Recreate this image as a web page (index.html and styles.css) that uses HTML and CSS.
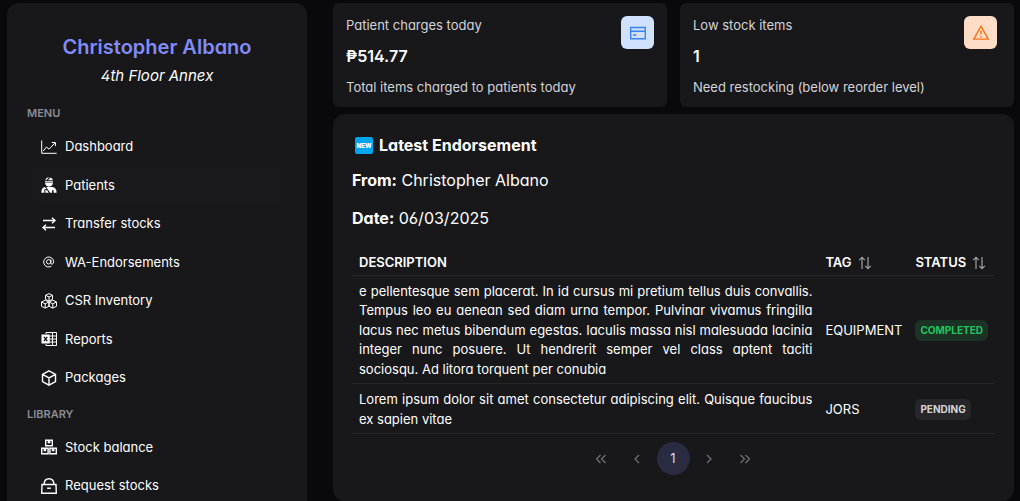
FILE: index.html
```html
<!DOCTYPE html>
<html lang="en">
<head>
<meta charset="utf-8">
<meta name="viewport" content="width=device-width, initial-scale=1">
<title>Dashboard</title>
<link rel="stylesheet" href="styles.css">
</head>
<body>
<div class="shell">
  <aside class="sidebar">
    <header class="profile">
      <h1 class="profile-name">Christopher Albano</h1>
      <p class="profile-place">4th Floor Annex</p>
    </header>
    <nav>
      <h2 class="nav-title">MENU</h2>
      <ul class="nav-list">
        <li><a class="nav-link" href="#dashboard">
          <svg class="nav-icon" viewBox="0 0 16 16"><path d="M.7 1.500v12.800h15M2.200 12l3.300-4 2.600 2.200L14 3.900M10.800 3.500h3.600v3.600"/></svg>Dashboard</a></li>
        <li><a class="nav-link active" href="#patients">
          <svg class="nav-icon solid" viewBox="0 0 16 16"><path d="M4.200 3.300C5 1.200 6.400.3 8 .3l-2.600 3zM7 3.300 9.400.5c1.200.4 2.100 1.300 2.500 2.800zM4 4.200h8v1.200H4zM4.100 6.100h7.800C11.700 8.400 10.100 9.700 8 9.700S4.300 8.400 4.100 6.100zM.4 15.700c-.1-3.200 1-5.200 3.400-5.700l1.800 2.300H3.300v3.400zM4.300 13.200h1.900l1.500 2.500H4.300zM5.100 10h5.800c3.300.3 4.800 2.400 4.700 5.700h-3v-2.500H11v2.500H9.200z"/></svg>Patients</a></li>
        <li><a class="nav-link" href="#transfer">
          <svg class="nav-icon bold" viewBox="0 0 16 16"><path d="M2 4.500h12M11 1.700l3 2.800-3 2.800M14 11.500H2M5 8.700l-3 2.800 3 2.800"/></svg>Transfer stocks</a></li>
        <li><a class="nav-link" href="#endorsements">
          <svg class="nav-icon" viewBox="0 0 16 16"><circle cx="7.700" cy="7.800" r="2.200"/><path d="M9.900 5.500v3.300c0 2 2.800 1.700 2.800-1A5 5 0 1 0 10.400 12.200"/></svg>WA-Endorsements</a></li>
        <li><a class="nav-link" href="#inventory">
          <svg class="nav-icon" viewBox="0 0 16 16"><path d="m8 .6 3.500 1.700v4L8 8 4.500 6.300v-4zM4.500 2.300 8 4l3.500-1.700M8 4v4M4.200 7.200l3.700 1.800v4.300l-3.700 1.800-3.700-1.800V9zM.5 9l3.700 1.800L7.900 9M4.200 10.800v4.300M11.800 7.200l3.700 1.800v4.300l-3.700 1.800-3.700-1.800V9zM8.100 9l3.700 1.800L15.500 9M11.800 10.800v4.300"/></svg>CSR Inventory</a></li>
        <li><a class="nav-link" href="#reports">
          <svg class="nav-icon" viewBox="0 0 16 16"><path d="M5 3V1.500h10.500v13H5V13M9 5h6.500M9 8h6.500M9 11h6.500M11.500 1.500v13"/><path class="fill" d="M.5 3.500h8.300v9H.5z"/><path class="cut" d="m3 5.800 3.300 4.400M6.300 5.800 3 10.200"/></svg>Reports</a></li>
        <li><a class="nav-link" href="#packages">
          <svg class="nav-icon bold" viewBox="0 0 16 16"><path d="m8 .9 6.500 3.500v7.200L8 15.100l-6.500-3.500V4.400zM1.500 4.400 8 7.900l6.500-3.500M8 7.900v7.200"/></svg>Packages</a></li>
      </ul>
      <h2 class="nav-title">LIBRARY</h2>
      <ul class="nav-list">
        <li><a class="nav-link" href="#balance">
          <svg class="nav-icon bold" viewBox="0 0 16 16"><path d="M4.700 1.200h6.600v5.600H4.700zM.7 9.200h6.400v5.600H.7zM8.900 9.200h6.400v5.600H8.900zM7.400 1.500v2h1.200v-2M3.300 9.500v2h1.200v-2M11.500 9.500v2h1.200v-2"/></svg>Stock balance</a></li>
        <li><a class="nav-link" href="#request">
          <svg class="nav-icon bold" viewBox="0 0 16 16"><path d="M1 6.500h14l.3 8.700H.7zM3 6.500C3.200 2.800 5.200.8 8 .8s4.800 2 5 5.700M6.200 10.200h3.600"/></svg>Request stocks</a></li>
      </ul>
    </nav>
  </aside>

  <main class="content">
    <div class="stats">
      <section class="stat">
        <div class="stat-text">
          <h2 class="stat-label">Patient charges today</h2>
          <p class="stat-value">₱514.77</p>
          <p class="stat-note">Total items charged to patients today</p>
        </div>
        <span class="stat-badge blue">
          <svg class="stat-icon" viewBox="0 0 16 16"><path d="M.7 2.500h14.600v11.300H.7zM.7 6.200h14.600M3 10h3.200"/></svg>
        </span>
      </section>
      <section class="stat alert">
        <div class="stat-text">
          <h2 class="stat-label">Low stock items</h2>
          <p class="stat-value">1</p>
          <p class="stat-note">Need restocking (below reorder level)</p>
        </div>
        <span class="stat-badge orange">
          <svg class="stat-icon" viewBox="0 0 16 16"><path d="m8 1.200 7.200 12.900H.8zM8 5.600v4M8 11v1.400"/></svg>
        </span>
      </section>
    </div>

    <section class="panel">
      <h2 class="panel-title">
        <svg class="new-icon" viewBox="0 0 18 17"><rect width="18" height="17" rx="2"/><text x="9" y="11" text-anchor="middle">NEW</text></svg>
        Latest Endorsement
      </h2>
      <p class="meta"><strong>From:</strong> Christopher Albano</p>
      <p class="meta"><strong>Date:</strong> 06/03/2025</p>

      <table class="table">
        <thead>
          <tr>
            <th class="wide">DESCRIPTION</th>
            <th><button class="sort" type="button">TAG <svg class="sort-icon" viewBox="0 0 14 14"><path d="M4 13V1.500M1.200 4.200 4 1.400l2.800 2.800M10 1v11.500M7.200 9.800l2.800 2.800 2.800-2.800"/></svg></button></th>
            <th><button class="sort" type="button">STATUS <svg class="sort-icon" viewBox="0 0 14 14"><path d="M4 13V1.500M1.200 4.200 4 1.400l2.800 2.800M10 1v11.500M7.200 9.800l2.800 2.800 2.800-2.800"/></svg></button></th>
          </tr>
        </thead>
        <tbody>
          <tr>
            <td class="description">e pellentesque sem placerat. In id cursus mi pretium tellus duis convallis. Tempus leo eu aenean sed diam urna tempor. Pulvinar vivamus fringilla lacus nec metus bibendum egestas. Iaculis massa nisl malesuada lacinia integer nunc posuere. Ut hendrerit semper vel class aptent taciti sociosqu. Ad litora torquent per conubia</td>
            <td>EQUIPMENT</td>
            <td><span class="tag done">COMPLETED</span></td>
          </tr>
          <tr>
            <td class="description">Lorem ipsum dolor sit amet consectetur adipiscing elit. Quisque faucibus ex sapien vitae</td>
            <td>JORS</td>
            <td><span class="tag pending">PENDING</span></td>
          </tr>
        </tbody>
      </table>

      <nav class="pager" aria-label="Pages">
        <button class="page" type="button" aria-label="First page"><svg class="page-icon" viewBox="0 0 12 12"><path d="M5.500 2 1.500 6l4 4M10.500 2l-4 4 4 4"/></svg></button>
        <button class="page" type="button" aria-label="Previous page"><svg class="page-icon" viewBox="0 0 12 12"><path d="M8 2 4 6l4 4"/></svg></button>
        <button class="page current" type="button" aria-current="page">1</button>
        <button class="page" type="button" aria-label="Next page"><svg class="page-icon" viewBox="0 0 12 12"><path d="m4 2 4 4-4 4"/></svg></button>
        <button class="page" type="button" aria-label="Last page"><svg class="page-icon" viewBox="0 0 12 12"><path d="m1.500 2 4 4-4 4M6.500 2l4 4-4 4"/></svg></button>
      </nav>
    </section>
  </main>
</div>
</body>
</html>
```

FILE: styles.css
```css
* { box-sizing: border-box; }

html { scrollbar-width: none; }

body {
  margin: 0;
  background: #09090b;
  color: #fff;
  font: 13px/1.5 Inter, "Noto Sans", sans-serif;
  font-feature-settings: "cv02", "cv03", "cv04", "cv11";
}

h1, h2, p, ul { margin: 0; padding: 0; }
ul { list-style: none; }
svg { fill: none; stroke: currentColor; flex: none; }
button { font: inherit; font-feature-settings: inherit; color: inherit; background: none; border: 0; padding: 0; }

.shell {
  display: flex;
  align-items: flex-start;
  gap: 26px;
  padding: 3px 6px 0 7px;
}

.sidebar {
  flex: 0 0 300px;
  padding: 29px 20px 24px;
  background: #18181b;
  border-radius: 12px;
}

.profile { text-align: center; margin-bottom: 15px; }
.profile-name { font-size: 20px; line-height: 30px; font-weight: 600; color: #818cf8; }
.profile-place { font-size: 15px; line-height: 28px; font-style: italic; }

.nav-title {
  padding: 0 0 7px;
  font-size: 11px;
  line-height: 16px;
  font-weight: 600;
  color: #8c8c94;
}
.nav-list + .nav-title { padding-top: 8px; }

.nav-link {
  display: flex;
  align-items: center;
  gap: 8px;
  padding: 9px 14px 10px;
  border-radius: 10px;
  color: #fff;
  text-decoration: none;
}
.nav-link.active { background: #19191c; }
.nav-icon { width: 16px; height: 16px; stroke-width: 1; }
.nav-icon.bold { stroke-width: 1.4; }
.nav-icon.solid { fill: currentColor; stroke: none; }
.fill { fill: currentColor; stroke: none; }
.cut { stroke: #18181b; stroke-width: 1.4; }

.content { flex: 1; min-width: 0; }

.stats {
  display: grid;
  grid-template-columns: 1fr 1fr;
  gap: 13px;
  margin-bottom: 7px;
}
.stat {
  display: flex;
  justify-content: space-between;
  align-items: flex-start;
  padding: 12px 13px 10px;
  background: #18181b;
  border-radius: 6px;
}
.stat.alert { padding-right: 17px; }
.stat-text { display: grid; gap: 12px; }
.stat-label, .stat-note { font-size: 13px; line-height: 20px; font-weight: 400; color: #d4d4d8; }
.stat-value { font-size: 16px; line-height: 18px; font-weight: 600; }
.stat-badge {
  display: grid;
  place-items: center;
  width: 33px;
  height: 33px;
  margin-top: 1px;
  border-radius: 6px;
}
.blue { background: #d0e1fd; color: #3b82f6; }
.orange { background: #feddc7; color: #f97316; }
.stat-icon { width: 16px; height: 16px; stroke-width: 1.4; }

.panel {
  min-height: calc(100vh - 114px);
  padding: 19px 20px 20px 19px;
  background: #18181b;
  border-radius: 12px;
}
.panel-title {
  display: flex;
  align-items: center;
  gap: 6px;
  padding-left: 3px;
  margin-bottom: 11px;
  font-size: 16px;
  line-height: 24px;
  font-weight: 700;
}
.new-icon { width: 18px; height: 17px; stroke: none; }
.new-icon rect { fill: #00a6ed; }
.new-icon text { fill: #fff; font-size: 6px; font-weight: 900; }

.meta { margin-bottom: 14px; font-size: 16px; line-height: 24px; }
.meta strong { font-weight: 700; }

.table { width: 100%; border-collapse: collapse; }
.table th, .table td {
  padding: 6px 6px 4px 7px;
  border-bottom: 1px solid #27272a;
  text-align: left;
  white-space: nowrap;
}
.table th { padding-top: 9px; padding-bottom: 2px; font-weight: 600; }
.table .wide { width: 100%; }
.table .description { white-space: normal; text-align: justify; }
.sort { display: flex; align-items: center; gap: 6px; }
.sort-icon { width: 14px; height: 14px; color: #a1a1aa; stroke-width: 1.2; }

.tag {
  display: inline-block;
  padding: 3px 5px;
  border-radius: 6px;
  font-size: 10px;
  line-height: 15px;
  font-weight: 700;
}
.done { background: #1b3224; color: #22c55e; }
.pending { background: #27272a; color: #d4d4d8; }

.pager { display: flex; justify-content: center; gap: 3px; padding-top: 8px; }
.page {
  display: grid;
  place-items: center;
  width: 33px;
  height: 33px;
  border-radius: 50%;
  color: #71717a;
}
.page-icon { width: 12px; height: 12px; stroke-width: 1.2; }
.current { background: #292b40; color: #d4d6f8; }
```
